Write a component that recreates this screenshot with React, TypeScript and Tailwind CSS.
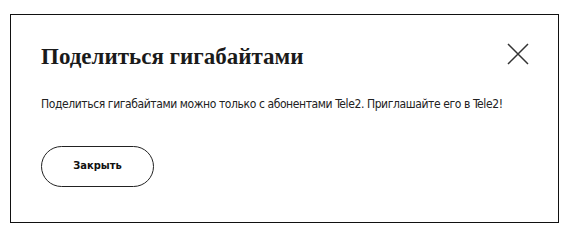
import React from 'react';

export default function App() {
  return (
    <div className="w-[565px] h-[231px] bg-white overflow-hidden pl-[10px] pt-[14px] font-['DejaVu_Sans_Condensed','DejaVu_Sans',sans-serif]">
      <div className="w-[549px] h-[209px] border border-[#111] bg-white pl-[30px] pr-[29px] pt-[28px]">
        <div className="flex items-start justify-between">
          <h2 className="font-['Liberation_Serif',serif] font-bold text-[23px] leading-[28px] text-[#1a1a1a]">
            Поделиться гигабайтами
          </h2>
          <button className="w-[22px] h-[22px] flex items-center justify-center">
            <svg width="22" height="22" viewBox="0 0 22 22" fill="none">
              <path d="M1 1L21 21M21 1L1 21" stroke="#333" strokeWidth="1.5" />
            </svg>
          </button>
        </div>
        <p className="mt-[25px] whitespace-nowrap text-[12px] tracking-[-0.4px] leading-[16px] text-[#222]">
          Поделиться гигабайтами можно только с абонентами Tele2. Приглашайте его в Tele2!
        </p>
        <button className="mt-[34px] w-[113px] h-[41px] rounded-full border border-[#222] text-[11px] font-bold text-[#111]">
          Закрыть
        </button>
      </div>
    </div>
  );
}
